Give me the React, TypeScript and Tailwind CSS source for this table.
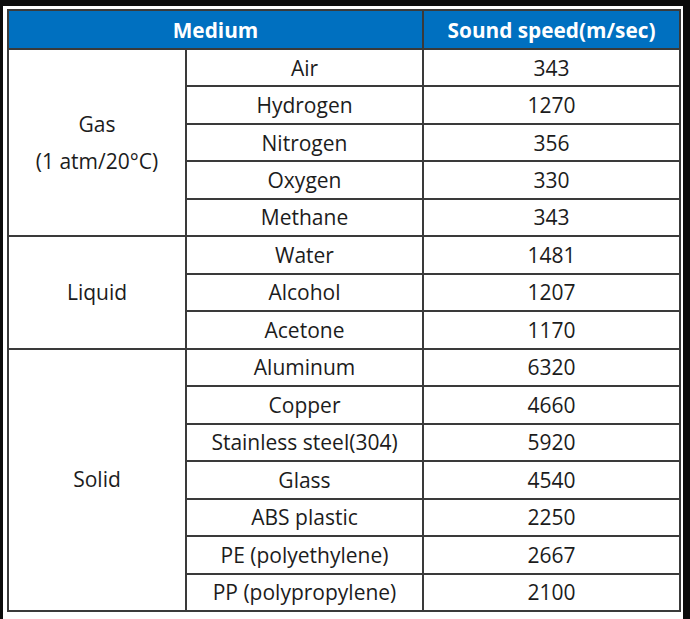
type Row = { name: string; speed: string };

type Group = { label: string[]; rows: Row[] };

const groups: Group[] = [
  {
    label: ["Gas", "(1 atm/20°C)"],
    rows: [
      { name: "Air", speed: "343" },
      { name: "Hydrogen", speed: "1270" },
      { name: "Nitrogen", speed: "356" },
      { name: "Oxygen", speed: "330" },
      { name: "Methane", speed: "343" },
    ],
  },
  {
    label: ["Liquid"],
    rows: [
      { name: "Water", speed: "1481" },
      { name: "Alcohol", speed: "1207" },
      { name: "Acetone", speed: "1170" },
    ],
  },
  {
    label: ["Solid"],
    rows: [
      { name: "Aluminum", speed: "6320" },
      { name: "Copper", speed: "4660" },
      { name: "Stainless steel(304)", speed: "5920" },
      { name: "Glass", speed: "4540" },
      { name: "ABS plastic", speed: "2250" },
      { name: "PE (polyethylene)", speed: "2667" },
      { name: "PP (polypropylene)", speed: "2100" },
    ],
  },
];

const cell = "border-2 border-[#3a3a3a] p-0 text-center align-middle";

export default function App() {
  return (
    <div className="h-[619px] w-[690px] overflow-hidden bg-[#0c0c0c] pl-[3px] pr-[7px] pt-[6px]">
      <div className="h-full bg-white pl-[4px] pt-[3px]">
        <table
          className="w-[672px] table-fixed border-collapse text-[21px] leading-tight text-[#1c1c1c]"
          style={{ fontFamily: '"Open Sans", "Noto Sans", sans-serif' }}
        >
          <colgroup>
            <col className="w-[178px]" />
            <col className="w-[237px]" />
            <col className="w-[257px]" />
          </colgroup>
          <thead>
            <tr className="h-[39px] bg-[#0070c0] text-[20.8px] font-semibold text-white">
              <th colSpan={2} className={cell}>
                Medium
              </th>
              <th className={cell}>Sound speed(m/sec)</th>
            </tr>
          </thead>
          <tbody>
            {groups.map((g) =>
              g.rows.map((r, i) => (
                <tr key={r.name} className="h-[37.47px]">
                  {i === 0 && (
                    <td rowSpan={g.rows.length} className={`${cell} leading-[37px]`}>
                      {g.label.map((l) => (
                        <div key={l}>{l}</div>
                      ))}
                    </td>
                  )}
                  <td className={cell}>{r.name}</td>
                  <td className={cell}>{r.speed}</td>
                </tr>
              ))
            )}
          </tbody>
        </table>
      </div>
    </div>
  );
}
